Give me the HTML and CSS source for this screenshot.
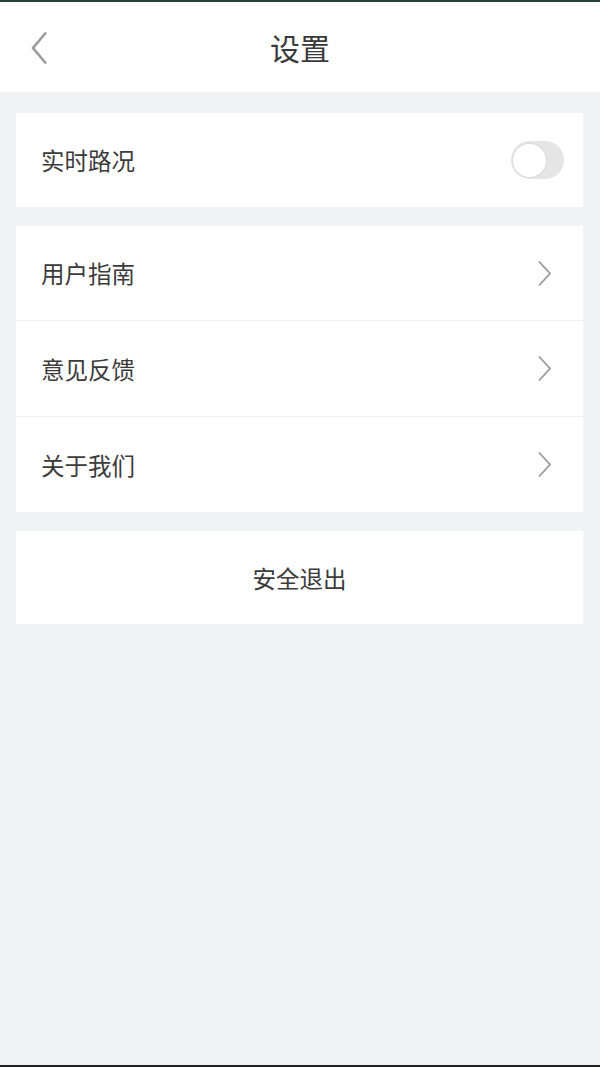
FILE: index.html
```html
<!DOCTYPE html>
<html lang="zh-CN">
<head>
  <meta charset="UTF-8" />
  <meta name="viewport" content="width=device-width, initial-scale=1.0"/>
  <title>设置</title>
  <link rel="stylesheet" href="styles.css">
</head>
<body>

<div class="status-line"></div>

<header class="topbar">
  <a class="back" href="#">
    <svg width="18" height="34" viewBox="0 0 18 34">
      <polyline points="15,1.5 2,17 15,32.5" fill="none" stroke="#9a9a9a" stroke-width="2.6" stroke-linejoin="miter"/>
    </svg>
  </a>
  <h1>设置</h1>
</header>

<main class="content">
  <section class="group">
    <div class="row">
      <span>实时路况</span>
      <span class="switch"><span class="knob"></span></span>
    </div>
  </section>

  <section class="group">
    <a class="row" href="#">
      <span>用户指南</span>
      <svg class="arrow" width="15" height="27" viewBox="0 0 15 27">
        <polyline points="2,1.5 13,13.5 2,25.5" fill="none" stroke="#999" stroke-width="1.8"/>
      </svg>
    </a>
    <a class="row" href="#">
      <span>意见反馈</span>
      <svg class="arrow" width="15" height="27" viewBox="0 0 15 27">
        <polyline points="2,1.5 13,13.5 2,25.5" fill="none" stroke="#999" stroke-width="1.8"/>
      </svg>
    </a>
    <a class="row" href="#">
      <span>关于我们</span>
      <svg class="arrow" width="15" height="27" viewBox="0 0 15 27">
        <polyline points="2,1.5 13,13.5 2,25.5" fill="none" stroke="#999" stroke-width="1.8"/>
      </svg>
    </a>
  </section>

  <button class="logout">安全退出</button>
</main>

<div class="bottom-line"></div>

</body>
</html>
```

FILE: styles.css
```css
body {
  font-family: "Noto Sans CJK SC", "Noto Sans", sans-serif;
  margin: 0;
  min-height: 100vh;
  display: flex;
  flex-direction: column;
  background-color: #f2f3f5; /* page grey */
  color: #3b3b3b;
}

.status-line {
  height: 2px;
  background-color: #23403d; /* dark status bar edge */
}

.topbar {
  height: 90px;
  background-color: #fff;
  display: flex;
  align-items: center;
  justify-content: center;
  position: relative;
}

.topbar h1 {
  margin: 0;
  font-size: 30px;
  font-weight: normal;
  color: #3a3a3a;
}

.back {
  position: absolute;
  left: 31px;
  top: 29px;
  display: flex;
}

.content {
  flex: 1;
  display: flex;
  flex-direction: column;
  gap: 19px;
  padding: 21px 17px 0 16px;
}

.group {
  background-color: #fff;
  display: flex;
  flex-direction: column;
}

.row {
  height: 94px;
  display: flex;
  align-items: center;
  justify-content: space-between;
  padding: 0 31px 0 25px;
  font-size: 23.5px;
  color: #3b3b3b;
  text-decoration: none;
}

.row + .row {
  border-top: 1px solid #f0f0f0;
  height: 95px;
}

.switch {
  width: 53px;
  height: 38px;
  border-radius: 19px;
  background-color: #e5e5e5;
  margin-right: -12px;
  display: flex;
  align-items: center;
  padding-left: 2px;
  box-sizing: border-box;
}

.knob {
  width: 33px;
  height: 33px;
  border-radius: 50%;
  background-color: #fff;
  box-shadow: 0 0 1px 1px #dcdcdc;
}

.logout {
  height: 93px;
  border: none;
  background-color: #fff;
  font-family: inherit;
  font-size: 23.5px;
  color: #3b3b3b;
  cursor: pointer;
}

.bottom-line {
  height: 2px;
  background-color: #1e1e1e;
}
```
